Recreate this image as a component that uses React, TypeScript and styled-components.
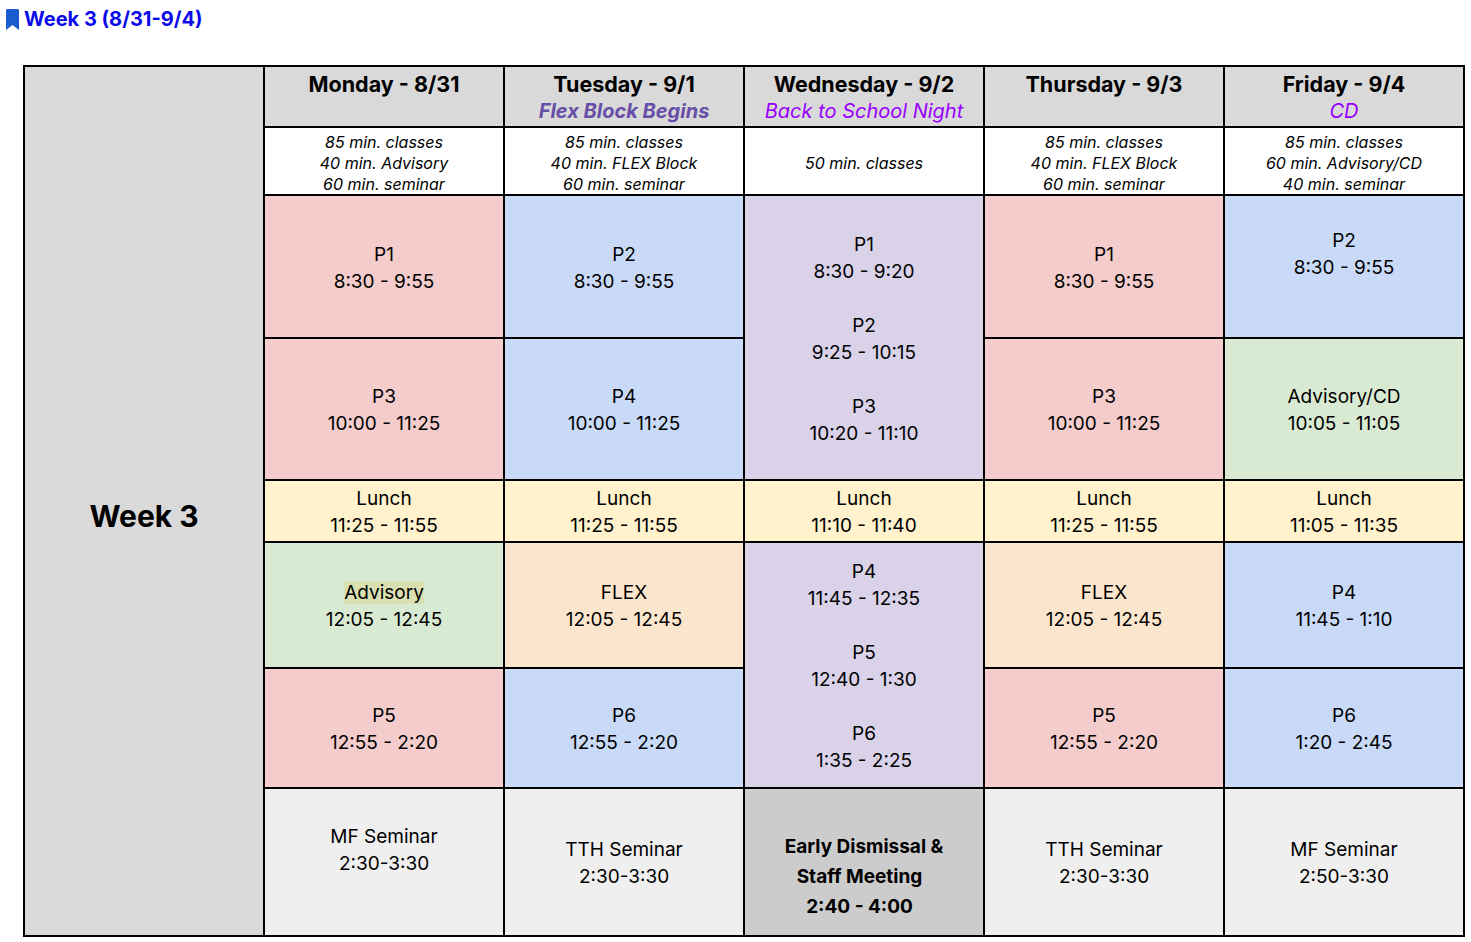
import React from 'react';
import styled, { createGlobalStyle } from 'styled-components';

const GlobalStyle = createGlobalStyle`
  body {
    margin: 0;
    background: #fff;
    font-family: Inter, "Noto Sans", sans-serif;
    color: #000;
  }
`

const Page = styled.div`
  padding: 8px 0 0 6px;
`

const Title = styled.div`
  display: flex;
  align-items: center;
  gap: 5px;
  height: 22px;
  font-size: 20px;
  font-weight: 700;
  color: #0b0bea;
`

const Grid = styled.div`
  display: grid;
  width: max-content;
  margin: 35px 0 0 17px;
  grid-template-columns: repeat(6, 238px);
  grid-template-rows: 59px 66px 141px 140px 60px 124px 118px 146px;
  gap: 2px;
  background: #000;
  border: 2px solid #000;
`

interface CellProps {
  $bg?: string
  $top?: boolean
  $span?: number
}

const Cell = styled.div<CellProps>`
  background: ${p => p.$bg || '#fff'};
  display: flex;
  flex-direction: column;
  align-items: center;
  justify-content: ${p => (p.$top ? 'flex-start' : 'center')};
  text-align: center;
  font-size: 19px;
  line-height: 27px;
  padding-top: 2px;
  ${p => (p.$span ? `grid-row: span ${p.$span};` : '')}
`

const WeekCell = styled(Cell)`
  grid-row: 1 / span 8;
  font-size: 30px;
  font-weight: 700;
  padding-top: 30px;
`

const DayName = styled.div`
  font-size: 21.5px;
  font-weight: 700;
  padding-top: 2px;
`

const Note = styled.div<{ $color: string; $bold?: boolean }>`
  font-size: 20px;
  font-style: italic;
  font-weight: ${p => (p.$bold ? 700 : 400)};
  color: ${p => p.$color};
`

const Info = styled(Cell)`
  font-size: 16px;
  font-style: italic;
  line-height: 21px;
  padding-top: 4px;
`

const Line = styled.div`
  white-space: pre;
  min-height: 27px;
`

const Highlight = styled.span`
  background: #d9dfb0;
`

const Dismissal = styled(Cell)`
  font-weight: 700;
  line-height: 30px;
  padding-top: 30px;
`

const Bookmark = () => (
  <svg width="13" height="21" viewBox="0 0 13 21">
    <path d="M0 1.5C0 .7.7 0 1.5 0h10C12.3 0 13 .7 13 1.5V21l-6.5-5L0 21z" fill="#1a5ccf" />
  </svg>
)

const colors = {
  pink: '#f4cccc',
  blue: '#c9daf8',
  purple: '#d9d2e9',
  green: '#d9ead3',
  yellow: '#fff2cc',
  orange: '#fce5cd',
  gray: '#d9d9d9',
  light: '#efefef',
  dark: '#cccccc',
}

const Block: React.FC<{ lines: React.ReactNode[]; bg: string; span?: number }> = ({ lines, bg, span }) => (
  <Cell $bg={bg} $span={span}>
    {lines.map((l, i) => <Line key={i}>{l}</Line>)}
  </Cell>
)

const App: React.FC = () => {
  return <Page>
    <GlobalStyle />
    <Title><Bookmark />Week 3 (8/31-9/4)</Title>
    <Grid>
      <WeekCell $bg={colors.gray}>Week 3</WeekCell>

      <Cell $bg={colors.gray} $top><DayName>Monday - 8/31</DayName></Cell>
      <Cell $bg={colors.gray} $top>
        <DayName>Tuesday - 9/1</DayName>
        <Note $color="#674ea7" $bold>Flex Block Begins</Note>
      </Cell>
      <Cell $bg={colors.gray} $top>
        <DayName>Wednesday - 9/2</DayName>
        <Note $color="#9900ff">Back to School Night</Note>
      </Cell>
      <Cell $bg={colors.gray} $top><DayName>Thursday - 9/3</DayName></Cell>
      <Cell $bg={colors.gray} $top>
        <DayName>Friday - 9/4</DayName>
        <Note $color="#9900ff">CD</Note>
      </Cell>

      <Info><div>85 min. classes</div><div>40 min. Advisory</div><div>60 min. seminar</div></Info>
      <Info><div>85 min. classes</div><div>40 min. FLEX Block</div><div>60 min. seminar</div></Info>
      <Info><div>50 min. classes</div></Info>
      <Info><div>85 min. classes</div><div>40 min. FLEX Block</div><div>60 min. seminar</div></Info>
      <Info><div>85 min. classes</div><div>60 min. Advisory/CD</div><div>40 min. seminar</div></Info>

      <Block bg={colors.pink} lines={['P1', '8:30 - 9:55']} />
      <Block bg={colors.blue} lines={['P2', '8:30 - 9:55']} />
      <Block bg={colors.purple} span={2} lines={['P1', '8:30 - 9:20', '', 'P2', '9:25 - 10:15', '', 'P3', '10:20 - 11:10']} />
      <Block bg={colors.pink} lines={['P1', '8:30 - 9:55']} />
      <Block bg={colors.blue} lines={['P2', '8:30 - 9:55', '']} />

      <Block bg={colors.pink} lines={['P3', '10:00 - 11:25']} />
      <Block bg={colors.blue} lines={['P4', '10:00 - 11:25']} />
      <Block bg={colors.pink} lines={['P3', '10:00 - 11:25']} />
      <Block bg={colors.green} lines={['Advisory/CD', '10:05 - 11:05']} />

      <Block bg={colors.yellow} lines={['Lunch', '11:25 - 11:55']} />
      <Block bg={colors.yellow} lines={['Lunch', '11:25 - 11:55']} />
      <Block bg={colors.yellow} lines={['Lunch', '11:10 - 11:40']} />
      <Block bg={colors.yellow} lines={['Lunch', '11:25 - 11:55']} />
      <Block bg={colors.yellow} lines={['Lunch', '11:05 - 11:35']} />

      <Block bg={colors.green} lines={[<Highlight>Advisory</Highlight>, '12:05 - 12:45']} />
      <Block bg={colors.orange} lines={['FLEX', '12:05 - 12:45']} />
      <Block bg={colors.purple} span={2} lines={['P4', '11:45 - 12:35', '', 'P5', '12:40 - 1:30', '', 'P6', '1:35 - 2:25']} />
      <Block bg={colors.orange} lines={['FLEX', '12:05 - 12:45']} />
      <Block bg={colors.blue} lines={['P4', '11:45 - 1:10']} />

      <Block bg={colors.pink} lines={['P5', '12:55 - 2:20']} />
      <Block bg={colors.blue} lines={['P6', '12:55 - 2:20']} />
      <Block bg={colors.pink} lines={['P5', '12:55 - 2:20']} />
      <Block bg={colors.blue} lines={['P6', '1:20 - 2:45']} />

      <Block bg={colors.light} lines={['MF Seminar', '2:30-3:30', '']} />
      <Block bg={colors.light} lines={['TTH Seminar', '2:30-3:30']} />
      <Dismissal $bg={colors.dark}>
        <div>Early Dismissal &amp;</div>
        <div style={{ whiteSpace: 'pre' }}>{'Staff Meeting  '}</div>
        <div style={{ whiteSpace: 'pre' }}>{'2:40 - 4:00  '}</div>
      </Dismissal>
      <Block bg={colors.light} lines={['TTH Seminar', '2:30-3:30']} />
      <Block bg={colors.light} lines={['MF Seminar', '2:50-3:30']} />
    </Grid>
  </Page>
}

export default App;
